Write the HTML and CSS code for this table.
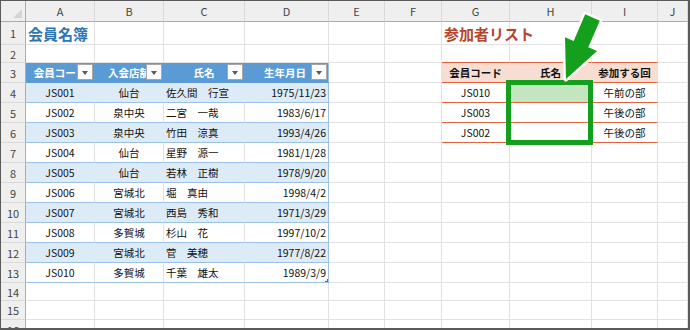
FILE: index.html
```html
<!DOCTYPE html>
<html lang="ja">
<head>
    <meta charset="UTF-8" />
    <title>会員名簿</title>
    <link rel="stylesheet" href="styles.css">
</head>
<body>
<div class="window">
    <div class="sheet">
        <div class="row head">
            <div class="corner"></div>
            <div class="ch">A</div><div class="ch">B</div><div class="ch">C</div><div class="ch">D</div><div class="ch">E</div>
            <div class="ch">F</div><div class="ch">G</div><div class="ch">H</div><div class="ch">I</div><div class="ch">J</div>
        </div>

        <div class="row r1">
            <div class="rh">1</div>
            <div class="c title blue">会員名簿</div><div class="c"></div><div class="c"></div><div class="c"></div><div class="c"></div><div class="c"></div>
            <div class="c title red">参加者リスト</div><div class="c"></div><div class="c"></div><div class="c"></div>
        </div>

        <div class="row r2">
            <div class="rh">2</div>
            <div class="c"></div><div class="c"></div><div class="c"></div><div class="c"></div><div class="c"></div><div class="c"></div>
            <div class="c t2"></div><div class="c t2"></div><div class="c t2"></div><div class="c"></div>
        </div>

        <div class="row">
            <div class="rh">3</div>
            <div class="c th">会員コード<span class="fbtn"></span></div>
            <div class="c th">入会店舗<span class="fbtn"></span></div>
            <div class="c th">氏名<span class="fbtn"></span></div>
            <div class="c th last right">生年月日<span class="fbtn"></span></div>
            <div class="c"></div><div class="c"></div>
            <div class="c t2 t2h">会員コード</div><div class="c t2 t2h">氏名</div><div class="c t2 t2h">参加する回</div>
            <div class="c"></div>
        </div>

        <div class="row band">
            <div class="rh">4</div>
            <div class="c t1 ctr">JS001</div><div class="c t1 ctr">仙台</div><div class="c t1">佐久間　行宣</div><div class="c t1 last num">1975/11/23</div>
            <div class="c"></div><div class="c"></div>
            <div class="c t2 ctr">JS010</div><div class="c t2 picked"></div><div class="c t2 ctr">午前の部</div>
            <div class="c"></div>
        </div>

        <div class="row">
            <div class="rh">5</div>
            <div class="c t1 ctr">JS002</div><div class="c t1 ctr">泉中央</div><div class="c t1">二宮　一哉</div><div class="c t1 last num">1983/6/17</div>
            <div class="c"></div><div class="c"></div>
            <div class="c t2 ctr">JS003</div><div class="c t2"></div><div class="c t2 ctr">午後の部</div>
            <div class="c"></div>
        </div>

        <div class="row band">
            <div class="rh">6</div>
            <div class="c t1 ctr">JS003</div><div class="c t1 ctr">泉中央</div><div class="c t1">竹田　涼真</div><div class="c t1 last num">1993/4/26</div>
            <div class="c"></div><div class="c"></div>
            <div class="c t2 ctr">JS002</div><div class="c t2"></div><div class="c t2 ctr">午後の部</div>
            <div class="c"></div>
        </div>

        <div class="row">
            <div class="rh">7</div>
            <div class="c t1 ctr">JS004</div><div class="c t1 ctr">仙台</div><div class="c t1">星野　源一</div><div class="c t1 last num">1981/1/28</div>
            <div class="c"></div><div class="c"></div><div class="c"></div><div class="c"></div><div class="c"></div><div class="c"></div>
        </div>

        <div class="row band">
            <div class="rh">8</div>
            <div class="c t1 ctr">JS005</div><div class="c t1 ctr">仙台</div><div class="c t1">若林　正樹</div><div class="c t1 last num">1978/9/20</div>
            <div class="c"></div><div class="c"></div><div class="c"></div><div class="c"></div><div class="c"></div><div class="c"></div>
        </div>

        <div class="row">
            <div class="rh">9</div>
            <div class="c t1 ctr">JS006</div><div class="c t1 ctr">宮城北</div><div class="c t1">堀　真由</div><div class="c t1 last num">1998/4/2</div>
            <div class="c"></div><div class="c"></div><div class="c"></div><div class="c"></div><div class="c"></div><div class="c"></div>
        </div>

        <div class="row band">
            <div class="rh">10</div>
            <div class="c t1 ctr">JS007</div><div class="c t1 ctr">宮城北</div><div class="c t1">西島　秀和</div><div class="c t1 last num">1971/3/29</div>
            <div class="c"></div><div class="c"></div><div class="c"></div><div class="c"></div><div class="c"></div><div class="c"></div>
        </div>

        <div class="row">
            <div class="rh">11</div>
            <div class="c t1 ctr">JS008</div><div class="c t1 ctr">多賀城</div><div class="c t1">杉山　花</div><div class="c t1 last num">1997/10/2</div>
            <div class="c"></div><div class="c"></div><div class="c"></div><div class="c"></div><div class="c"></div><div class="c"></div>
        </div>

        <div class="row band">
            <div class="rh">12</div>
            <div class="c t1 ctr">JS009</div><div class="c t1 ctr">宮城北</div><div class="c t1">菅　美穂</div><div class="c t1 last num">1977/8/22</div>
            <div class="c"></div><div class="c"></div><div class="c"></div><div class="c"></div><div class="c"></div><div class="c"></div>
        </div>

        <div class="row">
            <div class="rh">13</div>
            <div class="c t1 ctr">JS010</div><div class="c t1 ctr">多賀城</div><div class="c t1">千葉　雄太</div><div class="c t1 last num end">1989/3/9</div>
            <div class="c"></div><div class="c"></div><div class="c"></div><div class="c"></div><div class="c"></div><div class="c"></div>
        </div>

        <div class="row r14">
            <div class="rh">14</div>
            <div class="c"></div><div class="c"></div><div class="c"></div><div class="c"></div><div class="c"></div>
            <div class="c"></div><div class="c"></div><div class="c"></div><div class="c"></div><div class="c"></div>
        </div>

        <div class="row r15">
            <div class="rh">15</div>
            <div class="c"></div><div class="c"></div><div class="c"></div><div class="c"></div><div class="c"></div>
            <div class="c"></div><div class="c"></div><div class="c"></div><div class="c"></div><div class="c"></div>
        </div>

        <div class="row">
            <div class="rh">16</div>
            <div class="c"></div><div class="c"></div><div class="c"></div><div class="c"></div><div class="c"></div>
            <div class="c"></div><div class="c"></div><div class="c"></div><div class="c"></div><div class="c"></div>
        </div>
    </div>

    <!-- the frame and arrow drawn over H4:H6 -->
    <div class="frame"></div>
    <svg class="arrow" width="70" height="95" viewBox="0 0 70 95">
        <polygon points="35.2,14.3 49.8,20.7 38.3,47.3 47.1,51 16,79 15,37.2 23.7,40.9"
                 fill="#14a01c" stroke="#fff" stroke-width="5" stroke-linejoin="round" paint-order="stroke"/>
    </svg>
</div>
</body>
</html>
```

FILE: styles.css
```css
body {
    margin: 0;
    background: #fff;
    font-family: "Noto Sans CJK JP", "Noto Sans", sans-serif;
}

.window {
    position: relative;
    width: 690px;
    height: 330px;
    box-sizing: border-box;
    border: 1px solid #5a5a5a;
    border-right-width: 2px;
    border-bottom-width: 2px;
    overflow: hidden;
    background: #fff;
}

.row {
    display: grid;
    grid-template-columns: 25px 69px 69px 81px 84px 56px 57px 68px 82px 66px 1fr;
    height: 20px;
}

.row.head { height: 21px; }
.row.r1 { height: 23px; }
.row.r2 { height: 18px; }
.row.r14 { height: 18px; }
.row.r15 { height: 19px; }

.row > div {
    box-sizing: border-box;
    min-width: 0;
    display: flex;
    align-items: center;
    white-space: nowrap;
}

/* column / row headings */
.ch {
    justify-content: center;
    background: #efefef;
    border-right: 1px solid #d9d9d9;
    border-bottom: 1px solid #ababab;
    color: #444;
    font-size: 11px;
}

.corner {
    justify-content: flex-end;
    align-items: flex-end !important;
    padding: 0 3px 3px 0;
    background: #efefef;
    border-right: 1px solid #ababab;
    border-bottom: 1px solid #ababab;
}

.corner::after {
    content: "";
    border-left: 9px solid transparent;
    border-bottom: 9px solid #d4d4d4;
}

.rh {
    justify-content: center;
    background: #efefef;
    border-right: 1px solid #ababab;
    border-bottom: 1px solid #d9d9d9;
    color: #444;
    font-size: 11px;
}

/* plain cells */
.c {
    padding: 0 2px;
    border-right: 1px solid #e1e1e1;
    border-bottom: 1px solid #e1e1e1;
    font-size: 10.5px;
    color: #111;
}

.ctr { justify-content: center; }
.num { justify-content: flex-end; }

.title {
    font-size: 15px;
    font-weight: bold;
    overflow: visible;
}

.title.blue { color: #2e75b6; }
.title.red { color: #b5452c; }

/* 会員名簿 table */
.th {
    position: relative;
    justify-content: center;
    overflow: hidden;
    background: #5b9bd5;
    border-right-color: transparent;
    border-bottom-color: #5b9bd5;
    color: #fff;
    font-weight: bold;
}

.th.right {
    justify-content: flex-end;
    padding-right: 22px;
}

.fbtn {
    position: absolute;
    top: 1px;
    right: 1px;
    width: 16px;
    height: 16px;
    box-sizing: border-box;
    border: 1px solid #a6a6a6;
    background: #fdfdfd;
    display: flex;
    align-items: center;
    justify-content: center;
}

.fbtn::after {
    content: "";
    border-left: 3.5px solid transparent;
    border-right: 3.5px solid transparent;
    border-top: 4px solid #595959;
    margin-top: 1px;
}

.t1 {
    border-bottom-color: #9bc2e6;
}

.band .t1 {
    background: #ddebf7;
    border-right-color: transparent;
}

.t1.last,
.band .t1.last,
.th.last {
    border-right-color: #9bc2e6;
}

.t1.end {
    position: relative;
}

.t1.end::after {
    content: "";
    position: absolute;
    right: 0;
    bottom: 0;
    width: 3px;
    height: 3px;
    border-right: 1px solid #2e75b6;
    border-bottom: 1px solid #2e75b6;
    box-sizing: border-box;
}

/* 参加者リスト table */
.t2 {
    border-bottom-color: #e0633f;
}

.t2h {
    justify-content: center;
    background: #f8ddd3;
    border-right-color: transparent;
    font-weight: bold;
}

.picked {
    background: #c3e6c1;
}

.frame {
    position: absolute;
    left: 505px;
    top: 79px;
    width: 87px;
    height: 65px;
    box-sizing: border-box;
    border: 5px solid #14a01c;
}

.arrow {
    position: absolute;
    left: 549px;
    top: -1px;
}
```
